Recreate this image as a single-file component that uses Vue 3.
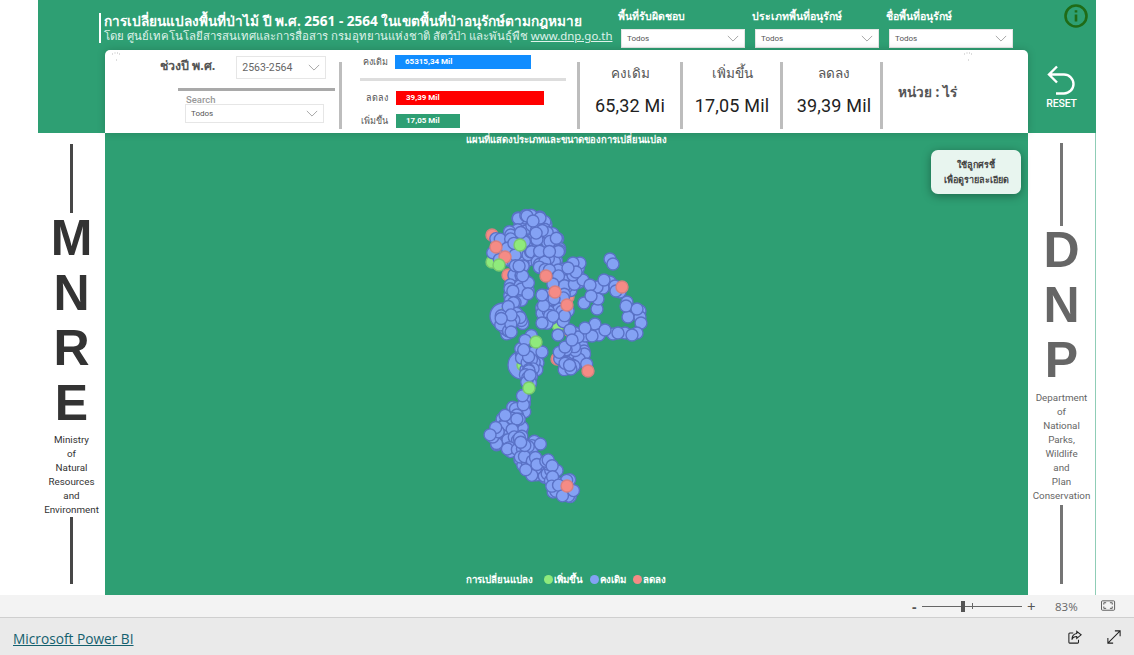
<template>
  <div class="page">
    <div class="report">
      <header class="header">
        <div class="top">
          <div class="title-block">
            <div class="title">การเปลี่ยนแปลงพื้นที่ป่าไม้ ปี พ.ศ. 2561 - 2564 ในเขตพื้นที่ป่าอนุรักษ์ตามกฎหมาย</div>
            <div class="subtitle">โดย ศูนย์เทคโนโลยีสารสนเทศและการสื่อสาร กรมอุทยานแห่งชาติ สัตว์ป่า และพันธุ์พืช <u>www.dnp.go.th</u></div>
          </div>
          <div class="filters">
            <div v-for="f in filters" :key="f" class="filter">
              <div class="filter-label">{{ f }}</div>
              <div class="select">
                <span>Todos</span>
                <svg class="chev" viewBox="0 0 14 8"><path d="M1 1l6 6 6-6" /></svg>
              </div>
            </div>
          </div>
          <svg class="info" viewBox="0 0 24 24">
            <circle cx="12" cy="12" r="10.5" />
            <path d="M12 10.5v7M12 6.2v2.2" />
          </svg>
        </div>
        <div class="card-row">
          <div class="card">
            <svg class="speck s1" viewBox="0 0 10 10"><path d="M1 3h1M3.500 2h1M6 2h1M8 3h1M5 9h1" /></svg>
            <svg class="speck s2" viewBox="0 0 10 10"><path d="M1 3h1M3.500 2h1M6 2h1M8 3h1M5 9h1" /></svg>
            <div class="period">
              <div class="period-row">
                <span class="period-label">ช่วงปี พ.ศ.</span>
                <div class="select year">
                  <span>2563-2564</span>
                  <svg class="chev" viewBox="0 0 14 8"><path d="M1 1l6 6 6-6" /></svg>
                </div>
              </div>
              <div class="period-rule"></div>
              <div class="search-label">Search</div>
              <div class="select search">
                <span>Todos</span>
                <svg class="chev" viewBox="0 0 14 8"><path d="M1 1l6 6 6-6" /></svg>
              </div>
            </div>
            <div class="bars">
              <div class="bar-row first">
                <span class="bar-label">คงเดิม</span>
                <div class="bar blue">65315,34 Mil</div>
              </div>
              <div class="bars-rule"></div>
              <div class="bar-row second">
                <span class="bar-label">ลดลง</span>
                <div class="bar red">39,39 Mil</div>
              </div>
              <div class="bar-row third">
                <span class="bar-label">เพิ่มขึ้น</span>
                <div class="bar green">17,05 Mil</div>
              </div>
            </div>
            <div v-for="k in kpis" :key="k.label" class="kpi" :style="{ width: k.w + 'px', paddingLeft: k.pad + 'px' }">
              <div class="kpi-label">{{ k.label }}</div>
              <div class="kpi-value">{{ k.value }}</div>
            </div>
            <div class="unit">หน่วย : ไร่</div>
          </div>
          <div class="reset">
            <svg viewBox="0 0 30 32" class="reset-icon">
              <path d="M10 2L2 10l8 8M2 10h15a9.500 9.500 0 0 1 0 19h-8" />
            </svg>
            <span>RESET</span>
          </div>
        </div>
      </header>
      <div class="body">
        <aside class="side left">
          <div class="rule r1"></div>
          <div class="big">M</div>
          <div class="big">N</div>
          <div class="big">R</div>
          <div class="big">E</div>
          <div class="small">Ministry<br />of<br />Natural<br />Resources<br />and<br />Environment</div>
          <div class="rule r2"></div>
        </aside>
        <main class="map">
          <div class="map-title">แผนที่แสดงประเภทและขนาดของการเปลี่ยนแปลง</div>
          <div class="callout">ใช้ลูกศรชี้<br />เพื่อดูรายละเอียด</div>
          <svg class="dots" viewBox="0 0 923 462">
            <circle v-for="(d, i) in dots" :key="i" :cx="d.x" :cy="d.y" :r="d.r" :class="d.c" />
          </svg>
          <div class="legend">
            <b>การเปลี่ยนแปลง</b>
            <span><i class="lg"></i>เพิ่มขึ้น</span>
            <span><i class="lb"></i>คงเดิม</span>
            <span><i class="lr"></i>ลดลง</span>
          </div>
        </main>
        <aside class="side right">
          <div class="rule r3"></div>
          <div class="big">D</div>
          <div class="big">N</div>
          <div class="big">P</div>
          <div class="small">Department<br />of<br />National<br />Parks,<br />Wildlife<br />and<br />Plan<br />Conservation</div>
          <div class="rule r4"></div>
        </aside>
      </div>
    </div>
    <div class="status">
      <span class="zoom-btn">-</span>
      <div class="slider"><i class="thumb"></i><i class="tick"></i></div>
      <span class="zoom-btn plus">+</span>
      <span class="pct">83%</span>
      <svg class="fit" viewBox="0 0 16 12">
        <rect x="0.500" y="0.500" width="14" height="10" rx="1" />
        <path d="M3 4.500v-2h2.500M12 4.500v-2H9.500M3 6.500v2h2.500M12 6.500v2H9.500" />
      </svg>
    </div>
    <footer class="footer">
      <a class="pbi">Microsoft Power BI</a>
      <div class="foot-icons">
        <svg viewBox="0 0 16 16" class="share">
          <path d="M6 3.500H2a1 1 0 0 0-1 1V14a1 1 0 0 0 1 1h9a1 1 0 0 0 1-1v-3" />
          <path d="M10 1.500l5 4-5 4V7.500C7.500 7.500 5.500 8.500 4.500 11c0-4 2-6.500 5.500-7z" />
        </svg>
        <svg viewBox="0 0 16 16" class="expand">
          <path d="M1 15L15 1M9 1h6v6M1 9v6h6" />
        </svg>
      </div>
    </footer>
  </div>
</template>

<script setup>
const filters = ['พื้นที่รับผิดชอบ', 'ประเภทพื้นที่อนุรักษ์', 'ชื่อพื้นที่อนุรักษ์']

const kpis = [
  { label: 'คงเดิม', value: '65,32 Mi', w: 103, pad: 0 },
  { label: 'เพิ่มขึ้น', value: '17,05 Mil', w: 100, pad: 1 },
  { label: 'ลดลง', value: '39,39 Mil', w: 100, pad: 5 }
]

// seeded so the scatter stays the same between runs
let seed = 41
const rnd = () => {
  seed = (seed * 16807) % 2147483647
  return seed / 2147483647
}

// blobs in page coordinates: x, y, spread x, spread y, count
const blobs = [
  [530, 226, 18, 11, 26],
  [512, 248, 22, 18, 46],
  [545, 250, 15, 22, 34],
  [518, 285, 11, 22, 28],
  [512, 320, 12, 16, 24],
  [564, 275, 18, 18, 28],
  [555, 308, 14, 22, 30],
  [572, 358, 17, 15, 28],
  [530, 355, 10, 22, 24],
  [530, 378, 7, 9, 8],
  [520, 405, 8, 12, 12],
  [510, 428, 13, 14, 20],
  [496, 436, 6, 12, 8],
  [525, 450, 18, 16, 30],
  [540, 468, 18, 11, 24],
  [558, 485, 16, 9, 20],
  [568, 493, 8, 5, 8]
]

// hand placed blue dots along the eastern arc and the loose ones
const arc = [
  [610, 259], [613, 264], [595, 324], [628, 317], [640, 311], [640, 317], [641, 323], [637, 333],
  [625, 333], [613, 334], [599, 335], [585, 336], [575, 333], [558, 335], [565, 347], [542, 323],
  [542, 352], [542, 295], [584, 303], [597, 309], [598, 299], [627, 302], [626, 306], [620, 292],
  [610, 282], [603, 288], [597, 287], [583, 280], [573, 275], [580, 263], [573, 263], [590, 285],
  [605, 330], [618, 333], [632, 335], [592, 336], [578, 337], [570, 330], [615, 286], [637, 309],
  [572, 340], [585, 328], [576, 272], [568, 268], [591, 296], [604, 280], [616, 291], [540, 218],
  [527, 216], [533, 221]
]

// under the blue scatter, so only partly visible
const redsUnder = [
  [492, 235], [530, 225], [508, 275], [511, 301], [525, 243], [568, 297], [570, 331], [557, 359],
  [545, 470], [534, 240]
]
const greensUnder = [[496, 255], [558, 325], [523, 365], [505, 314], [492, 262]]

// drawn last, fully visible
const redsTop = [[496, 247], [505, 257], [555, 292], [546, 276], [567, 305], [622, 287], [588, 371], [567, 486]]
const greensTop = [[499, 265], [520, 245], [536, 342], [529, 388]]

const dots = []
const push = (x, y, c, r = 6) => dots.push({ x: x - 105, y: y - 133, c, r })

// two oversized circles that sit under everything else
push(522, 365, 'blue', 14)
push(503, 316, 'blue', 13)
redsUnder.forEach(p => push(p[0], p[1], 'red'))
greensUnder.forEach(p => push(p[0], p[1], 'green'))
blobs.forEach(([x, y, sx, sy, n]) => {
  for (let i = 0; i < n; i++) {
    const a = rnd() * Math.PI * 2
    const m = Math.sqrt(rnd())
    const px = x + Math.cos(a) * sx * m
    const py = y + Math.sin(a) * sy * m
    if (redsTop.concat(greensTop).some(p => Math.hypot(p[0] - px, p[1] - py) < 5)) continue
    push(px, py, 'blue')
  }
})
arc.forEach(p => push(p[0], p[1], 'blue'))
redsTop.forEach(p => push(p[0], p[1], 'red'))
greensTop.forEach(p => push(p[0], p[1], 'green'))
</script>

<style scoped>
.page {
  width: 1134px;
  height: 655px;
  overflow: hidden;
  background: #fff;
  font-family: "Noto Sans", Roboto, sans-serif;
}

.report {
  width: 1058px;
  margin-left: 38px;
  height: 595px;
}

.header {
  height: 133px;
  background: #2e9f73;
}

.top {
  height: 50px;
  display: flex;
  position: relative;
}

.title-block {
  margin: 13px 0 0 61px;
  width: 519px;
  height: 30px;
  border-left: 2px solid #fff;
  padding-left: 3px;
  white-space: nowrap;
  color: #fff;
}

.title {
  font-size: 13.6px;
  font-weight: 700;
  line-height: 15px;
}

.subtitle {
  font-size: 11.4px;
  line-height: 15px;
  color: #dff3ea;
}

.filters {
  display: flex;
  margin-left: -2px;
  gap: 10px;
}

.filter {
  width: 124px;
  padding-top: 8px;
}

.filter-label {
  font-size: 10.5px;
  font-weight: 700;
  color: #fff;
  white-space: nowrap;
  height: 21px;
  line-height: 16px;
  margin-left: -3px;
}

.select {
  display: flex;
  align-items: center;
  justify-content: space-between;
  background: #fff;
  border: 1px solid #e6e6e6;
  box-sizing: border-box;
  height: 19px;
  padding: 0 5px;
  font-size: 8px;
  color: #555;
  font-family: Roboto, sans-serif;
}

.chev {
  width: 12px;
  height: 7px;
  fill: none;
  stroke: #999;
  stroke-width: 1;
}

.info {
  position: absolute;
  left: 1026px;
  top: 4px;
  width: 24px;
  height: 24px;
  fill: none;
  stroke: #1f6b16;
  stroke-width: 2.6;
}

.card-row {
  display: flex;
  height: 83px;
  padding-left: 67px;
}

.card {
  width: 923px;
  background: #fff;
  border-radius: 5px 5px 0 0;
  display: flex;
  box-shadow: 0 0 8px rgba(0, 0, 0, 0.18);
  position: relative;
  z-index: 1;
}

.speck {
  position: absolute;
  width: 10px;
  height: 10px;
  top: 1px;
  fill: none;
  stroke: #aaa;
  stroke-width: 0.8;
}

.s1 {
  left: 6px;
}

.s2 {
  left: 858px;
}

.period {
  width: 237px;
  border-right: 3px solid #bdbdbd;
  margin: 12px 0 4px;
  padding-left: 73px;
  box-sizing: border-box;
}

.period-row {
  display: flex;
  align-items: center;
  margin-left: -18px;
  margin-top: -7px;
  height: 25px;
  gap: 21px;
}

.period-label {
  font-size: 12.5px;
  font-weight: 700;
  color: #555;
  white-space: nowrap;
  margin-top: -4px;
}

.year {
  width: 90px;
  height: 23px;
  font-size: 10.5px;
  color: #666;
  flex: none;
}

.period-rule {
  margin: 8px 0 0 0;
  width: 157px;
  height: 3px;
  background: #a9a9a9;
}

.search-label {
  font-size: 9.5px;
  font-weight: 500;
  color: #999;
  margin: 3px 0 0 8px;
  line-height: 11px;
  font-family: Roboto, sans-serif;
}

.search {
  width: 139px;
  margin-left: 7px;
  margin-top: -1px;
}

.bars {
  width: 238px;
  border-right: 3px solid #bdbdbd;
  margin: 12px 0 4px;
  box-sizing: border-box;
  padding-left: 17px;
}

.bar-row {
  display: flex;
  align-items: center;
  gap: 7px;
}

.bar-label {
  width: 29px;
  text-align: right;
  font-size: 9px;
  color: #555;
  white-space: nowrap;
}

.first {
  margin-top: -7px;
}

.bars-rule {
  margin: 9px 0 0 1px;
  width: 206px;
  height: 3px;
  background: #ddd;
}

.second {
  margin-top: 10px;
}

.third {
  margin-top: 9px;
}

.bar {
  height: 14px;
  line-height: 14px;
  padding-left: 10px;
  box-sizing: border-box;
  color: #fff;
  font-size: 8px;
  font-weight: 700;
  font-family: Roboto, sans-serif;
}

.blue {
  width: 136px;
  background: #118dff;
}

.red {
  width: 148px;
  background: #ff0000;
  margin-left: 1px;
}

.green {
  width: 64px;
  background: #2e9f73;
  margin-left: 1px;
}

.kpi {
  margin: 12px 0 4px;
  border-right: 3px solid #bdbdbd;
  text-align: center;
  box-sizing: border-box;
  white-space: nowrap;
}

.kpi-label {
  font-size: 13.5px;
  color: #555;
  line-height: 20px;
  margin-top: 1px;
}

.kpi-value {
  font-size: 18px;
  color: #222;
  letter-spacing: 0.2px;
  line-height: 24px;
  margin-top: 11px;
  font-family: Roboto, sans-serif;
}

.unit {
  margin: 31px 0 0 15px;
  font-size: 13.6px;
  font-weight: 700;
  color: #555;
  white-space: nowrap;
}

.reset {
  width: 67px;
  padding-top: 14px;
  display: flex;
  flex-direction: column;
  align-items: center;
  color: #fff;
  font-size: 10.5px;
  font-weight: 500;
  font-family: Roboto, sans-serif;
  letter-spacing: -0.2px;
}

.reset-icon {
  width: 30px;
  height: 33px;
  fill: none;
  stroke: #fff;
  stroke-width: 2.4;
}

.body {
  display: flex;
  height: 462px;
  border-right: 1px solid #8fcdb6;
}

.side {
  width: 67px;
  display: flex;
  flex-direction: column;
  align-items: center;
  box-sizing: border-box;
}

.big {
  font-family: "Liberation Sans", sans-serif;
  font-weight: 700;
  font-size: 50px;
  line-height: 55px;
  text-align: center;
}

.small {
  font-family: Roboto, sans-serif;
  font-size: 9.8px;
  line-height: 14px;
  text-align: center;
  white-space: nowrap;
}

.left {
  color: #333;
  padding-top: 11px;
}

.right {
  color: #666;
  padding-top: 10px;
}

.rule {
  width: 3px;
  background: currentColor;
  opacity: 0.9;
}

.r1 {
  height: 69px;
  margin-bottom: -2px;
}

.r2 {
  height: 67px;
}

.r3 {
  height: 83px;
  margin-bottom: -3px;
}

.r4 {
  height: 79px;
  margin-top: 2px;
}

.left .small {
  margin-top: 2px;
}

.right .small {
  margin-top: 3px;
}

.map {
  width: 923px;
  background: #2e9f73;
  position: relative;
  display: flex;
  flex-direction: column;
  align-items: center;
  justify-content: space-between;
}

.map-title {
  font-size: 9.5px;
  font-weight: 700;
  color: #fff;
  line-height: 14px;
}

.callout {
  position: absolute;
  left: 826px;
  top: 17px;
  width: 90px;
  height: 44px;
  background: #e8f5ef;
  border-radius: 7px;
  font-size: 9px;
  font-weight: 700;
  color: #444;
  text-align: center;
  line-height: 15px;
  padding-top: 7px;
  box-sizing: border-box;
  box-shadow: 0 2px 10px rgba(0, 0, 0, 0.35);
  white-space: nowrap;
}

.dots {
  position: absolute;
  left: 0;
  top: 0;
  width: 923px;
  height: 462px;
}

.dots circle {
  stroke-width: 1.4;
}

.dots .blue {
  fill: #84a2f4;
  stroke: #5a72c6;
}

.dots .red {
  fill: #f58b85;
  stroke: #d8807f;
}

.dots .green {
  fill: #8fea7c;
  stroke: #7cc96e;
}

.legend {
  display: flex;
  align-items: center;
  gap: 7px;
  font-size: 9.7px;
  font-weight: 700;
  color: #fff;
  padding-bottom: 8px;
  margin-left: -2px;
  white-space: nowrap;
}

.legend b {
  margin-right: 4px;
}

.legend span {
  display: flex;
  align-items: center;
  gap: 1px;
}

.legend i {
  width: 9px;
  height: 9px;
  border-radius: 50%;
  display: block;
}

.lg {
  background: #8fea7c;
}

.lb {
  background: #84a2f4;
}

.lr {
  background: #f58b85;
}

.status {
  height: 23px;
  background: #f3f3f3;
  border-bottom: 1px solid #cfcfcf;
  box-sizing: border-box;
  display: flex;
  align-items: center;
  padding-left: 912px;
  color: #555;
  font-family: "Open Sans", sans-serif;
}

.zoom-btn {
  font-size: 14px;
  width: 10px;
  font-weight: 700;
}

.plus {
  margin-left: 5px;
  font-weight: 400;
  font-size: 15px;
}

.slider {
  width: 100px;
  height: 1px;
  background: #666;
  position: relative;
}

.thumb {
  position: absolute;
  left: 39px;
  top: -5px;
  width: 4px;
  height: 11px;
  background: #555;
}

.tick {
  position: absolute;
  left: 50px;
  top: -3px;
  width: 1px;
  height: 6px;
  background: #666;
}

.pct {
  font-size: 11.5px;
  margin-left: 18px;
  color: #666;
}

.fit {
  width: 15px;
  height: 12px;
  margin-left: 23px;
  fill: none;
  stroke: #555;
  stroke-width: 1;
}

.footer {
  height: 37px;
  background: #eaeaea;
  display: flex;
  align-items: center;
  justify-content: space-between;
  padding: 3px 13px 0;
  box-sizing: border-box;
}

.pbi {
  font-family: "Open Sans", sans-serif;
  font-size: 13.7px;
  font-weight: 500;
  color: #14606e;
  text-decoration: underline;
  white-space: nowrap;
}

.foot-icons {
  display: flex;
  gap: 25px;
  margin-top: -2px;
}

.foot-icons svg {
  width: 14px;
  height: 14px;
  fill: none;
  stroke: #222;
  stroke-width: 1.2;
}
</style>
